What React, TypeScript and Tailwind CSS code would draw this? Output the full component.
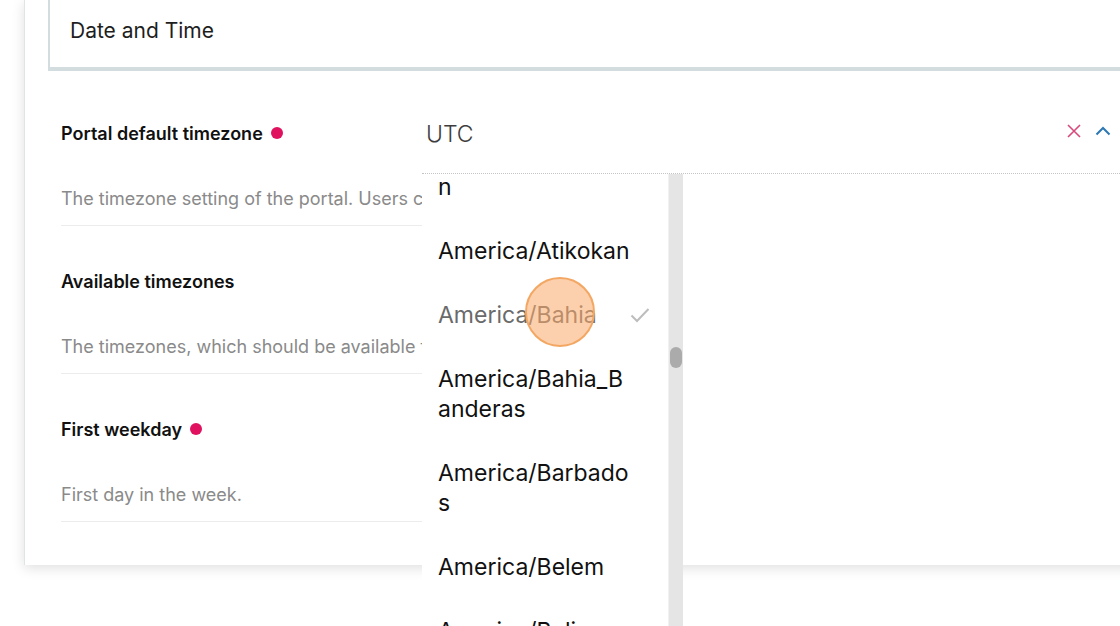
import React from "react";

type Item = { lines: string[]; selected?: boolean };

const items: Item[] = [
  { lines: ["America/Asuncio", "n"] },
  { lines: ["America/Atikokan"] },
  { lines: ["America/Bahia"], selected: true },
  { lines: ["America/Bahia_B", "anderas"] },
  { lines: ["America/Barbado", "s"] },
  { lines: ["America/Belem"] },
  { lines: ["America/Belize"] },
];

function Section({ label, desc, required }: { label: string; desc: string; required?: boolean }) {
  return (
    <div className="w-[361px] border-b border-[#ececec] pb-[13px]">
      <div className="flex h-[24px] items-center gap-[8px] text-[18px] font-semibold text-[#111]">
        <span>{label}</span>
        {required && <span className="h-[12px] w-[12px] rounded-full bg-[#e0115f]" />}
      </div>
      <div className="mt-[41px] h-[26px] overflow-hidden whitespace-nowrap text-[18px] leading-[26px] text-[#8a8a8a]">
        {desc}
      </div>
    </div>
  );
}

export default function App() {
  return (
    <div
      className="relative h-[626px] w-[1120px] overflow-hidden bg-white"
      style={{ fontFamily: "Inter, 'Noto Sans', sans-serif" }}
    >
      <div className="ml-[24px] h-[565px] w-[1120px] border-l border-[#dfe4e5] bg-white shadow-[0_3px_12px_rgba(0,0,0,0.13)]">
        <div className="ml-[23px] flex h-[71px] items-start border-b-[4px] border-l-2 border-[#d3dcde] pl-[20px] pt-[15px] text-[21px] text-[#1e1e1e]">
          Date and Time
        </div>
        <div className="flex flex-col gap-[43px] pl-[36px] pt-[50px]">
          <Section
            label="Portal default timezone"
            required
            desc="The timezone setting of the portal. Users can override it."
          />
          <Section label="Available timezones" desc="The timezones, which should be available for users." />
          <Section label="First weekday" required desc="First day in the week." />
        </div>
      </div>

      {/* Open select with dropdown */}
      <div className="absolute left-[422px] top-[95px] w-[698px]">
        <div className="flex h-[79px] items-center border-b border-dotted border-[#c4c4c4] pl-[4px] pr-[9px]">
          <span className="flex-1 text-[23px] font-light text-[#3d3d3d]">UTC</span>
          <svg width="14" height="14" viewBox="0 0 14 14" className="mr-[14px] -mt-[6px]">
            <path d="M1 1 L13 13 M13 1 L1 13" stroke="#d8497c" strokeWidth="1.6" fill="none" />
          </svg>
          <svg width="16" height="10" viewBox="0 0 16 10" className="-mt-[6px]">
            <path d="M1.5 8.5 L8 2 L14.5 8.5" stroke="#2d78b4" strokeWidth="2" fill="none" />
          </svg>
        </div>
        <div className="flex h-[460px] w-[261px] bg-white">
          <div className="h-full w-[247px] overflow-hidden border-r border-[#f1f1f1]">
            <div className="-mt-[49px]">
              {items.map((it, i) => (
                <div key={i} className="flex items-center py-[17px] pl-[16px] pr-[18px]">
                  <div className="flex-1 whitespace-nowrap text-[23px] leading-[30px]">
                    {it.lines.map((l, j) => (
                      <div key={j} className={it.selected ? "text-[#6a6a6a]" : "text-[#111]"}>
                        {l}
                      </div>
                    ))}
                  </div>
                  {it.selected && (
                    <svg width="20" height="16" viewBox="0 0 20 16">
                      <path d="M1.5 8.5 L7 14 L18.5 2" stroke="#bdbdbd" strokeWidth="2" fill="none" />
                    </svg>
                  )}
                </div>
              ))}
            </div>
          </div>
          <div className="relative h-full w-[14px] bg-[#e5e5e5]">
            <div className="absolute left-[1px] top-[173px] h-[21px] w-[12px] rounded-full bg-[#ababab]" />
          </div>
        </div>
      </div>

      {/* click indicator */}
      <div className="absolute left-[525px] top-[277px] h-[70px] w-[70px] rounded-full border-2 border-[#f3a763] bg-[rgba(252,170,105,0.55)]" />
    </div>
  );
}
